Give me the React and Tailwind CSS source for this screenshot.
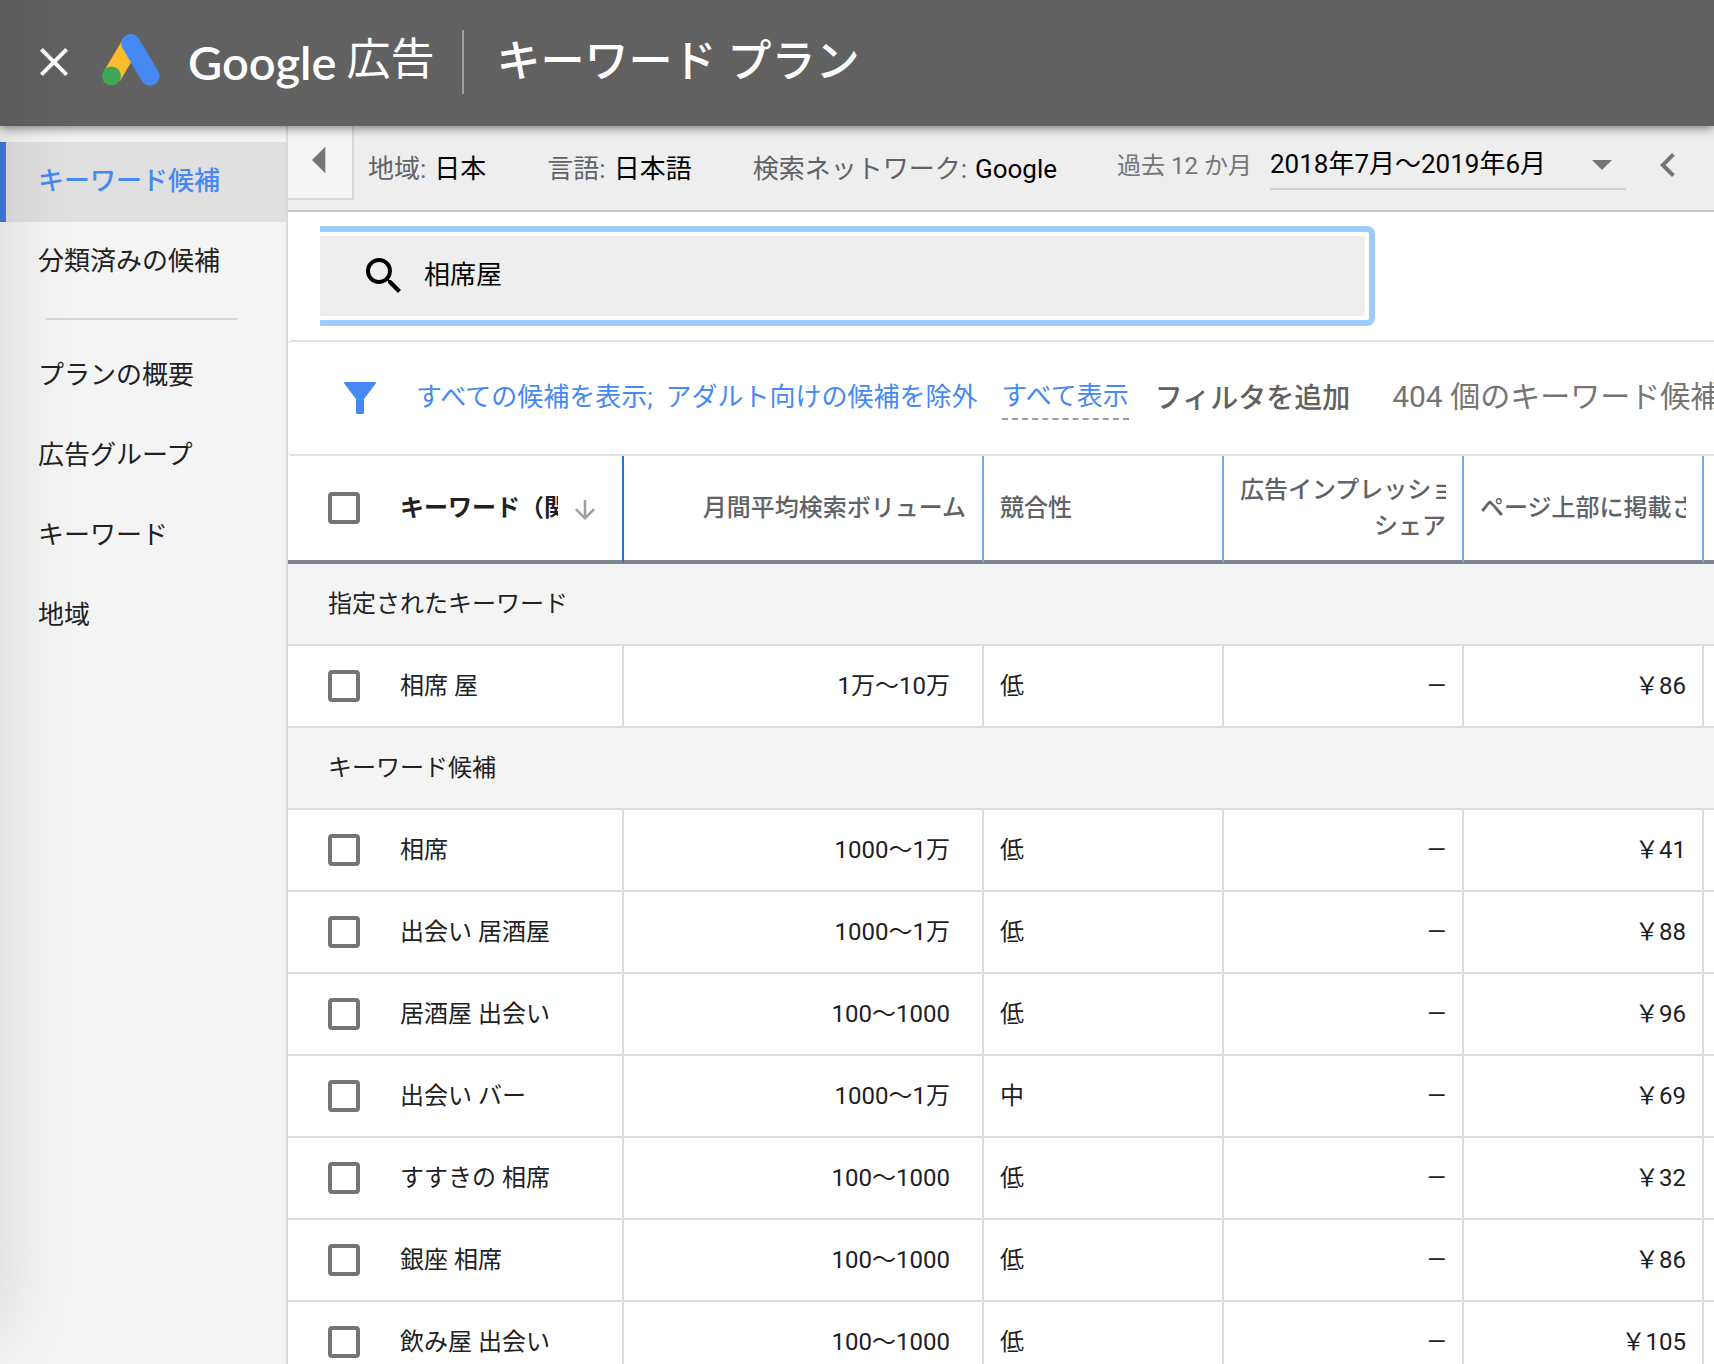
import { useState } from "react";
import {
  MdArrowDownward,
  MdArrowDropDown,
  MdArrowLeft,
  MdChevronLeft,
  MdClose,
  MdSearch,
} from "react-icons/md";

const planLinks = ["プランの概要", "広告グループ", "キーワード", "地域"];

const given = [{ word: "相席 屋", volume: "1万〜10万", level: "低", bid: "￥86" }];

const ideas = [
  { word: "相席", volume: "1000〜1万", level: "低", bid: "￥41" },
  { word: "出会い 居酒屋", volume: "1000〜1万", level: "低", bid: "￥88" },
  { word: "居酒屋 出会い", volume: "100〜1000", level: "低", bid: "￥96" },
  { word: "出会い バー", volume: "1000〜1万", level: "中", bid: "￥69" },
  { word: "すすきの 相席", volume: "100〜1000", level: "低", bid: "￥32" },
  { word: "銀座 相席", volume: "100〜1000", level: "低", bid: "￥86" },
  { word: "飲み屋 出会い", volume: "100〜1000", level: "低", bid: "￥105" },
];

const AdsLogo = () => (
  <svg viewBox="0 0 58 52" className="w-[58px] h-[52px]" aria-hidden="true">
    <path d="M29 10 10 42" stroke="#fbbc2d" strokeWidth="19" />
    <path
      d="M28.700 9.500 48 42"
      stroke="#4689f2"
      strokeWidth="19"
      strokeLinecap="round"
    />
    <circle cx="9.500" cy="42" r="9.500" fill="#3ba757" />
  </svg>
);

const FilterIcon = () => (
  <svg viewBox="0 0 32 32" className="w-8 h-8" aria-hidden="true">
    <path
      d="M1 0h30a1 1 0 0 1 .8 1.600L20 17v13.500a1.500 1.500 0 0 1-1.500 1.500h-5a1.500 1.500 0 0 1-1.500-1.500V17L.2 1.600A1 1 0 0 1 1 0z"
      fill="#4689f2"
    />
  </svg>
);

const Header = () => (
  <header className="relative z-10 flex shrink-0 items-center h-[126px] pl-[30px] pb-0.5 bg-[#616161] text-white shadow-[0_2px_10px_rgba(0,0,0,0.5)]">
    <button aria-label="閉じる">
      <MdClose size={48} />
    </button>
    <div className="ml-6 pb-1">
      <AdsLogo />
    </div>
    <div className="flex items-center ml-7 gap-2.5 leading-[64px]">
      <span className="font-['Lato',sans-serif] text-[47px] font-semibold">
        Google
      </span>
      <span className="pb-1 text-[44px] font-normal">広告</span>
    </div>
    <div className="w-[2px] h-16 ml-7 mr-8 bg-[#9e9e9e]" />
    <h1 className="text-[44px] leading-[64px] font-medium">キーワード プラン</h1>
  </header>
);

const NavLink = ({ label, active }) => (
  <a
    href="#"
    className={`flex items-center h-20 border-l-[6px] pl-8 pb-0.5 ${
      active
        ? "border-[#3f78e0] bg-[#e0e0e0] text-[#4689f2] font-medium"
        : "border-transparent"
    }`}
  >
    {label}
  </a>
);

const Sidebar = () => (
  <nav className="w-[288px] shrink-0 pt-4 border-r-2 border-[#dadada] bg-[#f4f4f4] text-[26px] text-[#212121]">
    <NavLink label="キーワード候補" active />
    <NavLink label="分類済みの候補" />
    <hr className="ml-[46px] mr-12 my-4 border-t-2 border-[#d8d8d8]" />
    {planLinks.map((label) => (
      <NavLink key={label} label={label} />
    ))}
  </nav>
);

const Setting = ({ title, value }) => (
  <div className="flex gap-2 whitespace-nowrap">
    <span className="text-[#5f6368]">{title}:</span>
    <span className="text-black">{value}</span>
  </div>
);

const Toolbar = () => (
  <div className="flex h-[86px] border-b-2 border-[#c6c6c6] bg-[#eeeeee] text-[26px]">
    <button
      aria-label="メニューを閉じる"
      className="flex items-center justify-center w-[66px] h-[74px] pb-1 border-r-2 border-b-2 border-[#d8d8d8] bg-[#f5f5f5] text-[#757575]"
    >
      <MdArrowLeft size={64} />
    </button>
    <div className="flex items-center gap-[61px] pt-0.5 pl-[14px]">
      <Setting title="地域" value="日本" />
      <Setting title="言語" value="日本語" />
      <Setting title="検索ネットワーク" value="Google" />
    </div>
    <div className="flex items-center ml-[60px] pb-2 shrink-0">
      <label htmlFor="period" className="pt-1 text-[24px] text-[#757575]">
        過去 12 か月
      </label>
      <div className="flex items-center ml-[18px] w-[356px] h-[52px] pt-0.5 border-b-2 border-[#d0d0d0]">
        <select
          id="period"
          className="w-full appearance-none bg-transparent text-black"
        >
          <option>2018年7月〜2019年6月</option>
        </select>
        <MdArrowDropDown size={48} className="shrink-0 text-[#757575]" />
      </div>
      <button aria-label="前の期間" className="ml-[18px] pt-0.5 text-[#757575]">
        <MdChevronLeft size={48} />
      </button>
    </div>
  </div>
);

const SearchBar = () => {
  const [query, setQuery] = useState("相席屋");
  return (
    <div className="h-[128px] pt-[14px] pl-8">
      <div className="w-[1055px] max-w-full h-[100px] py-1 pr-1 border-y-[6px] border-r-[6px] rounded-r-lg border-[#9ecbff]">
        <div className="flex items-center gap-4 h-full pl-10 bg-[#eeeeee] text-black">
          <MdSearch size={48} />
          <input
            aria-label="キーワード"
            value={query}
            onChange={(e) => setQuery(e.target.value)}
            className="flex-1 pb-0.5 bg-transparent outline-none text-[26px]"
          />
        </div>
      </div>
    </div>
  );
};

const Filters = () => (
  <div className="flex items-center h-[116px] pl-14 border-y-2 rounded-l border-[#e0e0e0] text-[26px] whitespace-nowrap overflow-hidden">
    <button aria-label="フィルタ">
      <FilterIcon />
    </button>
    <button className="ml-10 pb-0.5 text-[#4689f2]">
      すべての候補を表示;&nbsp; アダルト向けの候補を除外
    </button>
    <button className="ml-6 pb-0.5 leading-10 border-b-2 border-dashed border-[#9e9e9e] text-[#4689f2]">
      すべて表示
    </button>
    <button className="ml-[26px] pt-0.5 text-[28px] font-medium text-[#616161]">
      フィルタを追加
    </button>
    <span className="ml-[42px] pb-1 text-[30px] text-[#757575]">
      404 個のキーワード候補
    </span>
  </div>
);

const Checkbox = ({ label }) => (
  <input
    type="checkbox"
    aria-label={label}
    className="block shrink-0 w-8 h-8 appearance-none border-4 rounded-[4px] border-[#757575] checked:bg-[#757575]"
  />
);

const HeadCell = ({ children, className = "" }) => (
  <th
    className={`px-4 border-r-2 border-b-4 border-r-[#7baaea] border-b-[#80868b] text-[#5f6368] font-medium leading-9 ${className}`}
  >
    <div className="overflow-hidden whitespace-nowrap">{children}</div>
  </th>
);

const GroupRow = ({ label }) => (
  <tr className="h-[82px] bg-[#f4f4f4]">
    <th
      colSpan={6}
      className="pl-10 text-left font-normal border-b-2 border-[#dadce0]"
    >
      {label}
    </th>
  </tr>
);

const Row = ({ word, volume, level, bid }) => {
  const cell = "border-r-2 border-b-2 border-[#dadce0]";
  return (
    <tr className="h-[82px]">
      <td className={`pl-10 ${cell}`}>
        <div className="flex items-center gap-10">
          <Checkbox label={word} />
          <span>{word}</span>
        </div>
      </td>
      <td className={`pr-8 text-right ${cell}`}>{volume}</td>
      <td className={`pl-4 ${cell}`}>{level}</td>
      <td className={`pr-4 text-right ${cell}`}>—</td>
      <td className={`pr-4 text-right ${cell}`}>{bid}</td>
      <td className="border-b-2 border-[#dadce0]" />
    </tr>
  );
};

const KeywordTable = () => (
  <table className="w-full table-fixed border-separate border-spacing-0 text-[24px] text-[#202124]">
    <colgroup>
      <col className="w-[336px]" />
      <col className="w-[360px]" />
      <col className="w-[240px]" />
      <col className="w-[240px]" />
      <col className="w-[240px]" />
      <col />
    </colgroup>
    <thead>
      <tr className="h-[108px]">
        <th className="pl-10 border-r-2 border-b-4 border-r-[#1a73e8] border-b-[#80868b]">
          <div className="flex items-center">
            <Checkbox label="すべて選択" />
            <span className="w-[158px] ml-10 overflow-hidden whitespace-nowrap text-left">
              キーワード（関連性順）
            </span>
            <MdArrowDownward size={30} className="ml-3 mt-1 text-[#9e9e9e]" />
          </div>
        </th>
        <HeadCell className="text-right">月間平均検索ボリューム</HeadCell>
        <HeadCell className="text-left">競合性</HeadCell>
        <HeadCell className="text-right">
          広告インプレッション
          <br />
          シェア
        </HeadCell>
        <HeadCell className="text-right">ページ上部に掲載された</HeadCell>
        <th className="border-b-4 border-[#80868b]" />
      </tr>
    </thead>
    <tbody>
      <GroupRow label="指定されたキーワード" />
      {given.map((row) => (
        <Row key={row.word} {...row} />
      ))}
      <GroupRow label="キーワード候補" />
      {ideas.map((row) => (
        <Row key={row.word} {...row} />
      ))}
    </tbody>
  </table>
);

const App = () => {
  return (
    <div
      lang="ja"
      className="relative flex flex-col h-screen overflow-hidden bg-white font-['Roboto','Noto_Sans_CJK_JP',sans-serif]"
    >
      <Header />
      <div className="flex flex-1 min-h-0">
        <Sidebar />
        <main className="flex-1 min-w-0 overflow-hidden">
          <Toolbar />
          <SearchBar />
          <Filters />
          <KeywordTable />
        </main>
      </div>
      {/* soft shade along the left edge of the window */}
      <div className="absolute -top-20 bottom-8 -left-20 z-20 w-20 shadow-[0_0_80px_rgba(0,0,0,0.13)] pointer-events-none" />
    </div>
  );
};

export default App;
